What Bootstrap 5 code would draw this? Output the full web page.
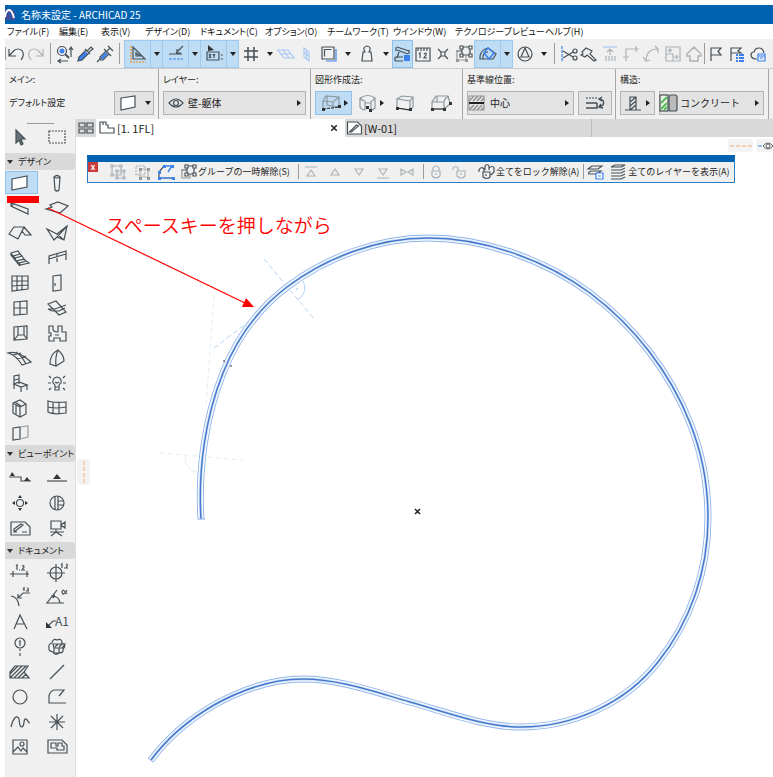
<!DOCTYPE html>
<html lang="ja">
<head>
<meta charset="utf-8">
<meta name="viewport" content="width=device-width, initial-scale=1">
<title>名称未設定 - ARCHICAD 25</title>
<link href="https://cdn.jsdelivr.net/npm/bootstrap@5.3.0/dist/css/bootstrap.min.css" rel="stylesheet">
<style>
:root{--ink:#465057;--panel:#f0f0f0;--band:#d9d9d9;--on:#bfdcf5;--title:#0063b1}
body{font-family:"Noto Sans CJK JP","Noto Sans",sans-serif;font-size:10px;line-height:16px;color:#222;font-feature-settings:"palt";background:#fff;padding:5px 0 0 5px;overflow-x:hidden}
button{border:0;background:none;padding:0;color:inherit;display:flex;align-items:center;justify-content:center;flex:none}
svg.ic{width:24px;height:24px;flex:none;fill:none;stroke:var(--ink);stroke-width:1.2;overflow:visible;display:block}
.b{stroke:#3b82f0!important}.bf{fill:#3b82f0;stroke:none}.k{fill:#333;stroke:none}.g{stroke:#aeb3b6!important}
.titlebar{background:var(--title);color:#fff;height:19px}
.menus{display:grid;grid-template-columns:52px 42px 44px 55px 65px 62px 66px 62px 90px 60px;height:15px;padding-left:2px;font-size:9px}
.menus a{color:#111;text-decoration:none;white-space:nowrap;line-height:15px}
.tools{height:30px;background:var(--panel);border-bottom:1px solid #ccc}
.tools button{width:20px;height:28px}
.tools .w21{width:21px}.tools .w25{width:25px}
.tools .caret{width:13px}
.caret{width:12px}
.caret::before{content:"";border:3px solid transparent;border-top:4px solid #222;border-bottom:0}
.duo{background:var(--on);border:1px solid #9fc9ec;height:28px;margin-right:-1px}
.tools .duo button{height:26px}.tools .duo .caret{width:12px;border-left:1px solid #9fc9ec}
.rule{width:1px;background:#9b9b9b;align-self:stretch;flex:none}
.info{background:var(--panel);height:50px}
.sect{padding:0 4px;border-right:1px solid #a6a6a6;flex:none}
.sect small{font-size:9px;display:block;line-height:14px}
.ctl{border:1px solid #b4b4b4;background:#e3e3e3;height:24px;font-size:10px;white-space:nowrap}
.arr::after{content:"";border:3px solid transparent;border-left:4px solid #222;border-right:0;margin:0 4px 0 auto}
.on{background:var(--on);border:1px solid #8ec0ea}
.tabs{background:var(--band);height:18px;font-size:11px;line-height:18px}
.tabx{background:#fff;width:249px}
.taby{width:247px;border-right:1px solid #bbb}
.taball{background:var(--band)}
.side{width:71px;background:var(--panel);border-right:1px solid #ddd}
.side h2{font-size:9px;font-weight:400;line-height:17px;margin:0;background:var(--band);border-radius:0 3px 3px 0;display:flex;align-items:center;gap:5px;padding-left:1px;white-space:nowrap}
.side h2::before{content:"";border:3px solid transparent;border-top:4px solid #333;border-bottom:0;margin-left:1px}
.kit{display:grid;grid-template-columns:33px 37px}
.kit button{height:25px;width:100%}
.kit button:nth-child(odd) svg{margin-right:3px}
.kit .on{height:23px;align-self:center}
.views{padding:3px 0 2px}
.stage{min-height:640px}
.draw{position:absolute;left:0;top:0;width:697px;height:640px;overflow:visible;pointer-events:none;z-index:2}
.palette{position:absolute;left:11px;right:38px;top:18px;z-index:3;background:var(--panel);border:1px solid #2a7cc4;border-top:7px solid var(--title);height:28px;font-size:9px}
.palette button{width:24px;height:19px;white-space:nowrap}
.palette .txt{width:auto}
.palette .txt svg{width:20px}
.palette .rule{margin:2px 0}
.palette .close{background:#c83c3c;color:#fff;font-weight:700;font-size:8px;width:10px;height:10px;line-height:8px;align-self:flex-start}
.chip{background:#f3f3f3;border-radius:3px;position:absolute;height:13px;overflow:hidden}
</style>
<script src="https://cdn.jsdelivr.net/npm/bootstrap@5.3.0/dist/js/bootstrap.bundle.min.js"></script>
</head>
<body>
<header>
<div class="titlebar d-flex align-items-center">
<svg width="16" height="19" viewBox="0 0 16 19" aria-hidden="true"><path d="M0 4h7l3 3v8H0z" fill="#3c4f9c"/><path d="M0 12Q1 5 4 5T9 13" fill="none" stroke="#fff" stroke-width="1.8"/></svg>
<span>名称未設定 - ARCHICAD 25</span></div>
<nav class="menus" aria-label="メニュー">
<a href="#">ファイル(F)</a><a href="#">編集(E)</a><a href="#">表示(V)</a><a href="#">デザイン(D)</a><a href="#">ドキュメント(C)</a><a href="#">オプション(O)</a><a href="#">チームワーク(T)</a><a href="#">ウインドウ(W)</a><a href="#">テクノロジープレビュー</a><a href="#">ヘルプ(H)</a>
</nav>
<div class="tools d-flex align-items-center" role="toolbar" aria-label="標準">
<span class="rule my-2"></span>
<button aria-label="取り消し"><svg class="ic" viewBox="0 0 24 24"><path d="M5 7v7h7M5 14L10 8.500Q14 5.500 18 8.500Q21 13 17 18"/></svg></button>
<button aria-label="やり直し"><svg class="ic" viewBox="0 0 24 24"><path class="g" d="M19 7v7h-7M19 14L14 8.500Q10 5.500 6 8.500Q3 13 7 18"/></svg></button>
<span class="rule my-1 mx-1"></span>
<button aria-label="検索と選択"><svg class="ic" viewBox="0 0 24 24"><circle cx="9" cy="9" r="4.500"/><circle cx="9" cy="9" r="2.500" class="bf"/><path d="M12 12l4 4" stroke-width="2"/><path d="M18 15V6m-2 2l2-3 2 3M15 19H6m2-2l-3 2 3 2" /></svg></button>
<button aria-label="パラメータ取得"><svg class="ic" viewBox="0 0 24 24"><path d="M5 19l1-4 6-6 3 3-6 6z" class="bf"/><path d="M5 19l1-4 7-7 3 3-7 7zM12 7l5 5M14 9l4-4 2 2-4 3"/></svg></button>
<button aria-label="パラメータ転送"><svg class="ic" viewBox="0 0 24 24"><path d="M7 16l6-6 2 2-6 6z" class="bf"/><path d="M4 20l3-3v-2l6-6 3 3-6 6H7M11 7l7 7M14 9l3-3M15 4l5 5"/></svg></button>
<span class="rule my-1 mx-1"></span>
<div class="duo d-flex"><button class="w25" aria-label="ガイド"><svg class="ic" viewBox="0 0 24 24"><path stroke="#f08a24" stroke-dasharray="2 1" d="M5 4v16h15"/><path d="M7 5v12h12zM10 11v3h4z"/></svg></button><button class="caret" aria-label="ガイド設定"></button></div>
<div class="duo d-flex"><button class="w25" aria-label="スナップ"><svg class="ic" viewBox="0 0 24 24"><path d="M5 12h13M12 11l7-7M13 7v4h4"/><path class="b" stroke-dasharray="3 1" d="M5 17h14"/></svg></button><button class="caret" aria-label="スナップ設定"></button></div>
<div class="duo d-flex"><button class="w25" aria-label="座標情報"><svg class="ic" viewBox="0 0 24 24"><path class="k" d="M6 3l6 5-6 1z"/><path d="M5 10h12v8H5zM7 12l2 4m0-4l-2 4m4-4l1 2 1-2m-1 2v2M19 13h2m-2 4h2"/></svg></button><button class="caret" aria-label="座標設定"></button></div>
<button class="w25" aria-label="グリッド"><svg class="ic" viewBox="0 0 24 24"><path stroke-width="1.500" d="M9 5v14M15 5v14M5 9h14M5 15h14"/></svg></button><button class="caret" aria-label="グリッド設定"></button>
<button aria-label="水平面"><svg class="ic" viewBox="0 0 24 24"><path stroke="#a9c8f6" d="M4 8h10l6 8H10zM7 12h10M9 8l6 8"/></svg></button>
<button aria-label="垂直面"><svg class="ic" viewBox="0 0 24 24"><path stroke="#a9c8f6" d="M10 6l5 4v9l-5-4zM12.500 8v9M10 10l5 4"/></svg></button>
<button class="w25" aria-label="参照"><svg class="ic" viewBox="0 0 24 24"><path class="b" d="M9 19h10V7"/><path d="M5 5h12v12H5zM7.500 14.500V7.500h7"/></svg></button><button class="caret" aria-label="参照設定"></button>
<button class="w25" aria-label="重力"><svg class="ic" viewBox="0 0 24 24"><path d="M10 10q-3-5 2-6 5 1 2 6h2l1 9H7l1-9z"/></svg></button><button class="caret" aria-label="重力設定"></button>
<button class="w21 on" aria-label="要素スナップ"><svg class="ic" viewBox="0 0 24 24"><path d="M6 5l12 4M6 8l11 4M5 5v4M18 8v4M8 10l-2 6M4 15h8M4 19h8M4 15v4"/><path class="bf" d="M13 13h6v6h-6z"/></svg></button>
<button aria-label="測定"><svg class="ic" viewBox="0 0 24 24"><path d="M5 6h14v13H5zM7 6v3M10 6v3M13 6v3M16 6v3M8 12l1-1v5M13 12q3-2 2 1l-2 3h3"/></svg></button>
<button aria-label="交点"><svg class="ic" viewBox="0 0 24 24"><path d="M7 7l3 3M17 7l-3 3M7 17l3-3M17 17l-3-3M10 10h4v4h-4z"/></svg></button>
<button class="w21" aria-label="グループ"><svg class="ic" viewBox="0 0 24 24"><path d="M10 5h8v8h-8zM4 9h6"/><path d="M5 9v9h9v-5" stroke="#999"/><path fill="#fff" d="M8 4h3v3H8zM17 4h3v3h-3zM8 12h3v3H8zM17 12h3v3h-3z"/><path fill="#999" stroke="none" d="M4 17h3v3H4zM13 17h3v3h-3z"/></svg></button>
<div class="duo d-flex"><button class="w25" aria-label="トレース"><svg class="ic" viewBox="0 0 24 24"><path d="M4 17v-3q1-6 8-8l8 6-3 5H4zM7 17v-3q1-4 5-4"/><path class="b" stroke-width="1.500" d="M12 6l6 5-5 6-5-6z"/></svg></button><button class="caret" aria-label="トレース設定"></button></div>
<button class="w25" aria-label="磁北"><svg class="ic" viewBox="0 0 24 24"><circle cx="12" cy="12" r="7"/><path d="M12 6l-4 9h8z"/></svg></button><button class="caret" aria-label="方位設定"></button>
<span class="rule my-1 mx-1"></span>
<button aria-label="分割"><svg class="ic" viewBox="0 0 24 24"><path class="b" stroke-dasharray="3 1" d="M5 4v15"/><path d="M6 9l10 6M6 16l10-6"/><circle cx="18" cy="9" r="2"/><circle cx="18" cy="16" r="2"/></svg></button>
<button aria-label="調整"><svg class="ic" viewBox="0 0 24 24"><path d="M5 10l4-4 6 3-2 3 6 6-2 1-7-6-2 2-4-2 2-1z"/></svg></button>
<button class="w21" aria-label="高さ調整"><svg class="ic" viewBox="0 0 24 24"><path stroke="#a9c8f6" d="M5 5h14"/><path class="g" d="M12 13V7m-3 3l3-3 3 3M8 14v5M11 14v5M14 14v5M17 14v5"/></svg></button>
<button class="w21" aria-label="角"><svg class="ic" viewBox="0 0 24 24"><path class="g" d="M7 19V7h13M17 4v6M4 15h6"/></svg></button>
<button class="w21" aria-label="フィレット"><svg class="ic" viewBox="0 0 24 24"><path class="g" d="M6 19Q6 7 18 7M15 4l3 3v4M3 15l3 4 4-1"/></svg></button>
<button class="w21" aria-label="サイズ変更"><svg class="ic" viewBox="0 0 24 24"><path class="g" d="M5 5h14v14H5zM5 12h7v7M9 11V7m-2 2l2-2 2 2M13 15h4m-2-2l2 2-2 2"/></svg></button>
<button class="w21" aria-label="屋根"><svg class="ic" viewBox="0 0 24 24"><path class="g" stroke-width="1.500" d="M5 12l7-7 7 7v2h-3v5H8v-5H5z"/></svg></button>
<span class="rule my-1"></span>
<button class="w21" aria-label="旗"><svg class="ic" viewBox="0 0 24 24"><path d="M7 19V6h10l-3 3.500 3 3.500H7"/></svg></button>
<button class="w21" aria-label="旗一覧"><svg class="ic" viewBox="0 0 24 24"><path d="M6 19V6h10l-3 3 3 2H6"/><path class="b" stroke-width="2" d="M11 13h2m1 0h5M11 16h2m1 0h5M11 19h2m1 0h5"/></svg></button>
<button class="w21" aria-label="クラウド"><svg class="ic" viewBox="0 0 24 24"><path d="M11 17H9q-4-1-4-4 0-3 3-3 1-4 5-4t5 5"/><path class="b" d="M12 12h7v7h-7zM12 14h7M14 16h3"/></svg></button>
</div>
<div class="info d-flex overflow-hidden" role="toolbar" aria-label="情報ボックス">
<div class="sect pt-1" style="width:154px"><small>メイン:</small><div class="d-flex align-items-center justify-content-between mt-1"><small>デフォルト設定</small><div class="ctl d-flex"><button style="width:26px" aria-label="壁の設定"><svg class="ic" viewBox="0 0 24 24"><path fill="#fff" d="M5 7l14-2v11l-14 3z"/></svg></button><button class="caret border-start" aria-label="お気に入り"></button></div></div></div>
<div class="sect pt-1" style="width:152px"><small>レイヤー:</small><button class="ctl arr mt-1 w-100 justify-content-start ps-1"><svg class="ic me-1" style="width:16px" viewBox="4 0 16 24"><path d="M5 12q7-8 14 0-7 8-14 0z"/><circle cx="12" cy="12" r="2.500"/></svg>壁-躯体</button></div>
<div class="sect pt-1" style="width:152px"><small>図形作成法:</small><div class="d-flex mt-1">
<button class="on arr" style="width:37px;height:24px" aria-label="直線"><svg class="ic ms-1" viewBox="0 0 24 24"><path stroke="#8b989f" d="M3 17V10l3-5 13 1v9M3 10l10 1 6-5M13 11v7M7 5v9l11 2"/><path stroke="#333" stroke-dasharray="3 1" d="M3 18l16-2"/><path class="k" d="M2 17h3v3H2zM18 14h3v3h-3z"/></svg></button>
<button class="arr" style="width:36px;height:24px" aria-label="曲線"><svg class="ic ms-1" viewBox="0 0 24 24"><path stroke="#8b989f" d="M4 7q8-5 15 0v10q-2 2-4 2v-9M4 7v9q2 3 5 3V10M4 7q3 3 5 3M19 7q-2 3-4 3M9 12h6"/><path class="k" d="M10 15h3v3h-3zM13 18h3v3h-3z"/></svg></button>
<button style="width:34px;height:24px" aria-label="台形"><svg class="ic" viewBox="0 0 24 24"><path stroke="#8b989f" d="M4 8l5-3 11 1v10M4 8l13 2v9L4 17zM17 10l3-4M17 19l3-3"/><path stroke="#222" d="M4 17l13 2"/><path class="k" d="M3 16h3v3H3zM16 17h3v3h-3z"/></svg></button>
<button style="width:37px;height:24px" aria-label="多角形"><svg class="ic" viewBox="0 0 24 24"><path stroke="#8b989f" d="M3 18V11l4-6h12l2 7M3 11h12v8M15 11q1-5 5-5M15 18l6-5M8 5v6"/><path stroke="#222" d="M3 18h12"/><path class="k" d="M2 17h3v3H2zM14 17h3v3h-3zM20 11h3v3h-3z"/></svg></button></div></div>
<div class="sect pt-1" style="width:153px"><small>基準線位置:</small><div class="d-flex mt-1 gap-1">
<button class="ctl arr justify-content-start" style="width:107px"><svg class="ic me-1" style="width:18px" viewBox="3 0 18 24"><path d="M4 10l5-5M8 10l5-5M12 10l5-5M16 10l3-3M4 19l5-5M8 19l5-5M12 19l5-5M16 19l3-3" stroke="#888"/><path d="M4 5h15v14H4z" stroke="#999"/><path stroke="#222" stroke-width="2" d="M4 12h15"/></svg>中心</button>
<button class="ctl" style="width:34px" aria-label="反転"><svg class="ic" viewBox="0 0 24 24"><path stroke-dasharray="2 1" d="M3 7h12"/><path stroke-width="1.500" d="M3 12h11M3 17h11V12M17 8q5 1 3 6l-3 2M19 6l-3 2 3 2M18 13l-2 3 4 1"/></svg></button></div></div>
<div class="sect pt-1" style="width:153px"><small>構造:</small><div class="d-flex mt-1 gap-1">
<button class="ctl arr" style="width:35px" aria-label="基本"><svg class="ic" viewBox="0 0 24 24"><path d="M4 19h16M9 19V6h6v13M9 11l6-5M9 15l6-5M9 19l6-5"/></svg></button>
<button class="ctl arr justify-content-start flex-grow-1"><svg class="ic" style="width:20px" viewBox="3 0 20 24"><rect x="3" y="4" width="8" height="16" fill="#e9f5e4"/><path stroke="#5bb85a" stroke-width="2" d="M4 12l6-6M4 18l6-6M7 19l3-3"/><rect x="12" y="4" width="8" height="16" rx="2" fill="#bbb"/></svg>コンクリート</button></div></div>
</div>
</header>
<div class="d-flex">
<aside class="side flex-shrink-0" aria-label="ツールボックス">
<div class="pt-1"><div class="mx-auto" style="width:27px;border-top:1px solid #999"></div></div>
<div class="kit pb-1">
<button aria-label="矢印"><svg class="ic" viewBox="0 0 24 24"><path fill="#68727a" d="M8 5l9 9-4 0 2 5-2 1-2-5-3 3z"/></svg></button><button aria-label="矩形選択"><svg class="ic" viewBox="0 0 24 24"><path stroke-dasharray="2 1" d="M4 6h16v12H4z"/></svg></button></div>
<h2>デザイン</h2>
<div class="kit">
<button class="on" aria-label="壁"><svg class="ic" viewBox="0 0 24 24"><path fill="#fff" d="M4 8l15-3v11l-15 3z"/></svg></button><button aria-label="柱"><svg class="ic" viewBox="0 0 24 24"><path d="M9 6q3-3 6 0l-1 13q-2 2-4 0zM9 6q3 2 6 0"/></svg></button>
<button aria-label="梁"><svg class="ic" viewBox="0 0 24 24"><path d="M3 7l17 6v5L3 10zM3 10l3-2 14 5"/></svg></button><button aria-label="スラブ"><svg class="ic" viewBox="0 0 24 24"><path d="M1 13l6-2-2-2 8-3 10 4-8 7z"/></svg></button>
<button aria-label="屋根"><svg class="ic" viewBox="0 0 24 24"><path d="M1 13l5-7 10 0-6 12zM16 6l7 8-6 0-3-4"/></svg></button><button aria-label="シェル"><svg class="ic" viewBox="0 0 24 24"><path d="M2 8l10 5L22 5l-3 14-7-3-3 3zM12 13l7 6M22 5l-10 11"/></svg></button>
<button aria-label="階段"><svg class="ic" viewBox="0 0 24 24"><path d="M3 7l7-2 2 3-7 2zM5 10l2 2 7-2-2-2M7 12l1 3 8-2-2-3M8 15l3 2 7-2-2-2M11 17l1 2 9-2-3-2M3 7v2l9 11"/></svg></button><button aria-label="手摺り"><svg class="ic" viewBox="0 0 24 24"><path d="M4 18V10l17-5v9M4 13l17-5M12 8v8"/></svg></button>
<button aria-label="カーテンウォール"><svg class="ic" viewBox="0 0 24 24"><path d="M4 5h16v13l-16 2zM4 10h16M4 15l16-1M9 5v14M14 5v14"/></svg></button><button aria-label="ドア"><svg class="ic" viewBox="0 0 24 24"><path d="M8 5l8-1v15l-8 1zM10 12v3"/></svg></button>
<button aria-label="窓"><svg class="ic" viewBox="0 0 24 24"><path d="M6 6l13-1v13l-13 1zM12 6v12M6 12h13"/></svg></button><button aria-label="天窓"><svg class="ic" viewBox="0 0 24 24"><path d="M3 8l8-3 10 11-7 3zM3 13l7 0 11-4M7 15l7 0 6-3M3 13l4 2"/></svg></button>
<button aria-label="開口"><svg class="ic" viewBox="0 0 24 24"><path d="M6 6l13-1v13l-13 1zM10 6v8h6V6M6 19l4-5M16 14l3 4"/></svg></button><button aria-label="ゾーン"><svg class="ic" viewBox="0 0 24 24"><path d="M4 5h4v3q0 3 5 3V5h4v6h4v9h-6v-3H9v3H4v-5h2v-3H4zM10 14h4"/></svg></button>
<button aria-label="メッシュ"><svg class="ic" viewBox="0 0 24 24"><path d="M0 7q10-3 23 9l-9 3Q8 9 0 7zM8 6q5 3 10 12M5 9l8-2M9 13l9-3"/></svg></button><button aria-label="モルフ"><svg class="ic" viewBox="0 0 24 24"><path d="M5 18q0-10 8-14 6 5 6 11l-8 5zM13 4q-3 7-2 16"/></svg></button>
<button aria-label="オブジェクト"><svg class="ic" viewBox="0 0 24 24"><path d="M6 18V5l5-1v9M6 13l5-2 8 3-6 2zM13 16v5M19 14v5M6 9l5-1"/></svg></button><button aria-label="ランプ"><svg class="ic" viewBox="0 0 24 24"><path d="M10 15q0-2-2-3-1-5 4-6 5 1 4 6-2 1-2 3v4h-4zM10 16h4M10 11l2 1 2-1M4 5l2 2M20 5l-2 2M3 12h3M18 12h3M4 19l2-2M20 19l-2-2"/></svg></button>
<button aria-label="設備"><svg class="ic" viewBox="0 0 24 24"><path d="M5 7l7-3 6 4v10l-6 3-7-4zM5 7l7 4 6-3M12 11v10M8 9v9M7 6l6 4"/></svg></button><button aria-label="カーテン"><svg class="ic" viewBox="0 0 24 24"><path d="M3 5q5 2 18 1v11q-13 2-18-1zM8 6v12M14 7v11M3 11q8 2 18 0"/></svg></button>
<button aria-label="壁端部"><svg class="ic" viewBox="0 0 24 24"><path d="M5 7l7-1v12l-7 1z"/><path stroke="#99a0a4" d="M12 6l8-1v11l-8 2"/></svg></button><span></span></div>
<h2>ビューポイント</h2>
<div class="kit views">
<button aria-label="断面図"><svg class="ic" viewBox="0 0 24 24"><path d="M1 11h12v4h10"/><path class="k" d="M4 6l3 4H2zM19 11l3 4h-6z"/></svg></button><button aria-label="立面図"><svg class="ic" viewBox="0 0 24 24"><path d="M2 15h20"/><path class="k" d="M12 8l4 5H8z"/></svg></button>
<button aria-label="展開図"><svg class="ic" viewBox="0 0 24 24"><circle cx="12" cy="12" r="3.500"/><path class="k" d="M12 4l2 3h-4zM12 20l2-3h-4zM4 12l3-2v4zM20 12l-3-2v4z"/></svg></button><button aria-label="詳細図"><svg class="ic" viewBox="0 0 24 24"><circle cx="12" cy="12" r="7"/><path d="M10 5v14M13 5v14M13 10h6M13 14h6"/></svg></button>
<button aria-label="ワークシート"><svg class="ic" viewBox="0 0 24 24"><path d="M3 6h14l5 5v8H3zM6 16l9-7-2-1-7 5v3l3 0M14 16h5"/></svg></button><button aria-label="カメラ"><svg class="ic" viewBox="0 0 24 24"><path d="M6 5h10v8H6zM16 9l4-3v6l-4-3M5 16h14M11 13v3l-5 4M11 16l6 4"/></svg></button></div>
<h2>ドキュメント</h2>
<div class="kit pb-3">
<button aria-label="寸法"><svg class="ic" viewBox="0 0 24 24"><path d="M2 14h19M5 11v6M19 11v6M8 6l1-1v5M11 10h1M14 6q2-1 2 1l-2 3h3"/></svg></button><button aria-label="レベル寸法"><svg class="ic" viewBox="0 0 24 24"><circle cx="11" cy="13" r="6"/><path d="M2 13h18M11 4v18M16 5l1-1v4M19 8h1M21 4q2 0 1 2l-1 2h2"/></svg></button>
<button aria-label="半径寸法"><svg class="ic" viewBox="0 0 24 24"><path d="M3 11q7 1 8 10M10 13l5-5h7M10 9v4h4M15 4l1-1v3M19 3q2 0 1 2l-1 1h2"/></svg></button><button aria-label="角度寸法"><svg class="ic" viewBox="0 0 24 24"><path d="M12 5L2 18h17M7 11q7 0 8 7M9 13l-2-2 3-1M22 5q-4 7-5 2 1-4 4 1l1 1"/></svg></button>
<button aria-label="テキスト"><svg class="ic" viewBox="0 0 24 24"><path d="M6 19l6-14 7 14M8 14h9"/></svg></button><button aria-label="ラベル"><svg class="ic" viewBox="0 0 24 24"><path d="M3 16l5-5h3"/><path class="k" d="M1 18v-6l6 6z"/><text x="10" y="16" font-size="12" fill="#465057" stroke="none">A1</text></svg></button>
<button aria-label="通り芯"><svg class="ic" viewBox="0 0 24 24"><circle cx="12" cy="8" r="5"/><path d="M11 7l1-1v5M12 14v2m0 2v3"/></svg></button><button aria-label="変更"><svg class="ic" viewBox="0 0 24 24"><path d="M7 8q1-5 5-3 5-2 5 3 5 2 1 6 1 4-4 4-4 3-6-1-5-1-4-4-1-4 3-5zM8 9h12l-3 4H9zM9 13v5h5v-5M10 12l3-3M14 12l3-3"/></svg></button>
<button aria-label="塗りつぶし"><svg class="ic" viewBox="0 0 24 24"><path d="M2 18V12l5-6h13l-4 6 5 6zM2 18L14 6M6 18L18 6M10 18l7-7M14 18l4-4M2 14L10 6"/></svg></button><button aria-label="線"><svg class="ic" viewBox="0 0 24 24"><path d="M5 19L19 5"/></svg></button>
<button aria-label="円弧"><svg class="ic" viewBox="0 0 24 24"><circle cx="12" cy="12" r="7"/></svg></button><button aria-label="ポリライン"><svg class="ic" viewBox="0 0 24 24"><path d="M14 11l5-6H9q-5 2-5 7v6h17"/></svg></button>
<button aria-label="スプライン"><svg class="ic" viewBox="0 0 24 24"><path d="M3 17C5 8 9 4 11 9C12 14 11 17 14 17C17 16 15 8 18 9C20 10 20 13 22 13"/></svg></button><button aria-label="ホットスポット"><svg class="ic" viewBox="0 0 24 24"><path d="M12 4v16M4 12h16M6 6l12 12M18 6L6 18"/></svg></button>
<button aria-label="図"><svg class="ic" viewBox="0 0 24 24"><path d="M5 5h14v14H5zM5 17l5-5 3 4 2-3 4 4"/><circle cx="14" cy="9" r="2"/></svg></button><button aria-label="図面"><svg class="ic" viewBox="0 0 24 24"><path d="M3 5h14l5 5v8H3zM6 8h5v3h2V8h4v3h2v4h-7v-2H6z"/></svg></button></div>
</aside>
<main class="flex-grow-1 position-relative">
<div class="tabs d-flex" role="tablist">
<button class="taball" style="width:20px" aria-label="タブ一覧"><svg class="ic" viewBox="0 0 24 24"><path d="M5 7h6v4H5zM13 7h6v4h-6zM5 13h6v4H5zM13 13h6v4h-6z"/></svg></button>
<div class="tabx d-flex align-items-center"><button role="tab"><svg class="ic" style="width:21px" viewBox="2 0 21 24"><path d="M7 6H6v11h14v-5h-6V9h-2M6 6h6v3M9 6v3"/></svg>[1. 1FL]</button><button class="ms-auto me-2" aria-label="タブを閉じる"><svg width="6" height="6" viewBox="0 0 6 6" stroke="#222" stroke-width="1.500"><path d="M0 0l6 6M6 0L0 6"/></svg></button></div>
<div class="taby d-flex"><button role="tab"><svg class="ic" style="width:19px" viewBox="3 0 18 24"><path fill="#fff" d="M5 6h10l4 4v8H5zM7 16l7-7 2 1-7 6z"/></svg>[W-01]</button></div></div>
<div class="stage position-relative">
<div class="palette">
<div class="d-flex align-items-center" role="toolbar" aria-label="コマンド">
<button class="close me-2" aria-label="閉じる">x</button>
<button aria-label="グループ化"><svg class="ic" viewBox="0 0 24 24"><path class="g" d="M6 6h9v9H6zM11 11h7v7h-7z"/><path class="g" fill="#f0f0f0" d="M5 5h2v2H5zM14 5h2v2h-2zM5 14h2v2H5zM10 10h2v2h-2zM17 10h2v2h-2zM10 17h2v2h-2zM17 17h2v2h-2z"/></svg></button>
<button aria-label="グループ解除"><svg class="ic" viewBox="0 0 24 24"><path class="g" stroke-dasharray="2 1" d="M6 6h9v9H6z"/><path class="g" d="M10 9h8v8h-8z"/><path fill="#999" stroke="none" d="M9 8h3v3H9zM17 8h3v3h-3zM9 17h3v3H9zM17 17h3v3h-3z"/></svg></button>
<button aria-label="編集"><svg class="ic" viewBox="0 0 24 24"><path class="b" stroke-width="1.500" d="M10 6h8l-4 6"/><path d="M10 6l-5 6v6h14"/><path class="b" d="M5 18h14"/><path class="bf" d="M4 17h3v3H4zM17 5h3v3h-3zM4 11h3v3H4zM9 5h3v3H9zM18 17h3v3h-3z"/></svg></button>
<button class="txt"><svg class="ic" viewBox="2 0 20 24"><path d="M11 6h7v8h-7zM5 10h6"/><path stroke="#999" d="M6 10v8h8v-4"/><path fill="#fff" d="M9 5h3v3H9zM17 5h3v3h-3zM9 13h3v3H9zM17 13h3v3h-3z"/></svg>グループの一時解除(S)</button>
<span class="rule ms-2"></span>
<button aria-label="最前面へ"><svg class="ic" viewBox="0 0 24 24"><path class="g" d="M6 7h12M8 16h8l-4-6z"/></svg></button>
<button aria-label="前面へ"><svg class="ic" viewBox="0 0 24 24"><path class="g" d="M8 15h8l-4-6z"/></svg></button>
<button aria-label="背面へ"><svg class="ic" viewBox="0 0 24 24"><path class="g" d="M8 9h8l-4 6z"/></svg></button>
<button aria-label="最背面へ"><svg class="ic" viewBox="0 0 24 24"><path class="g" d="M8 9h8l-4 6zM6 18h12"/></svg></button>
<button aria-label="標準順"><svg class="ic" viewBox="0 0 24 24"><path class="g" d="M6 9v6l5-3zM18 9v6l-5-3z"/></svg></button>
<span class="rule ms-1"></span>
<button aria-label="ロック"><svg class="ic" viewBox="0 0 24 24"><path class="g" d="M8 11h8v5q-4 4-8 0zM9 11V8q3-4 6 0v3M12 13v2"/></svg></button>
<button aria-label="ロック解除"><svg class="ic" viewBox="0 0 24 24"><path class="g" d="M9 11h8v5q-4 4-8 0zM10 11V8q-2-3-5 0v2M13 13v2"/></svg></button>
<button class="txt ms-1"><svg class="ic" viewBox="2 0 20 24"><path d="M9 12h7v5q-3 3-7 0zM10 12V9q-3-3-5 1v2M11 10V6q2-3 4 0v4M15 8q4-3 5 0v4l-3 3M12 14v2"/></svg>全てをロック解除(A)</button>
<span class="rule ms-1"></span>
<button aria-label="レイヤー設定"><svg class="ic" viewBox="0 0 24 24"><path d="M4 9l4-3h10l-4 3zM4 13l3-2h10l-4 3H4"/><path class="b" fill="#fff" d="M12 13h7v6h-7zM14 16h3"/></svg></button>
<button class="txt"><svg class="ic" viewBox="2 0 20 24"><path d="M5 7l4-2h10l-4 2zM5 10h10l4-2M5 13h10l4-2M5 16h10l4-2M5 19h10l4-2"/></svg>全てのレイヤーを表示(A)</button>
</div></div>
<svg class="chip" style="right:20px;top:2px" width="25" height="13" aria-hidden="true"><path d="M2 7h22" stroke="#f3b070" stroke-dasharray="4 2"/></svg>
<svg class="chip" style="right:0;top:2px" width="17" height="13" fill="none" aria-hidden="true"><path d="M2 7h4" stroke="#3b82f0"/><path d="M7 7q5-6 10 0-5 6-10 0z" stroke="#666"/><circle cx="12" cy="7" r="2" stroke="#666"/></svg>
<svg class="chip" style="left:1px;top:322px;height:26px" width="13" aria-hidden="true"><path d="M7 2v22" stroke="#f3b070" stroke-dasharray="4 2"/></svg>
<svg class="draw" viewBox="76 137 697 640" fill="none" role="img" aria-label="連続した曲線壁">
<defs><path id="wall" d="M201 519C198 470 205 418 223 373C236 340 258 309 287 287C327 257 378 238 428 238C485 238 545 260 590 293C634 326 670 372 690 423C702 453 708 487 708 518C708 570 691 621 658 662C626 703 573 727 521 727C484 727 446 712 410 702C375 692 339 679 303 679C272 679 241 690 214 705C190 719 168 737 151 760"/></defs>
<g stroke-dasharray="5 3"><path d="M264 259l51 61M214 348l42-32" stroke="#b4d3f2"/><path d="M214 296l-8 110M160 453l82 7" stroke="#e3effb"/></g>
<path d="M303 281q5 10-3 17l-3 2" stroke="#b4d3f2"/><path d="M185 457q0 13 14 16" stroke="#e3effb"/>
<use href="#wall" stroke="#8db3ea" stroke-width="7"/><use href="#wall" stroke="#fff" stroke-width="5.200"/><use href="#wall" stroke="#dbe7f9" stroke-width="3.400"/><use href="#wall" stroke="#4479cc" stroke-width="1.500"/>
<path d="M198 519h7M148 758l5 4" stroke="#86aee8"/>
<path d="M415 509l5 5M420 509l-5 5" stroke="#222" stroke-width="1.500"/><path d="M223 361h2M230 366h2" stroke="#333"/><circle cx="297" cy="289" r=".8" fill="#86aee8"/>
<path d="M48 208l197 95" stroke="#f00" stroke-width="1.200"/><path d="M254 307l-12 0 4-9z" fill="#f00"/>
<path d="M7 196h32v7H7z" fill="#f00"/>
<text x="106" y="233" font-size="19" font-weight="350" fill="#f00" style="font-feature-settings:normal">スペースキーを押しながら</text>
</svg>
</div>
</main>
</div>
</body>
</html>
